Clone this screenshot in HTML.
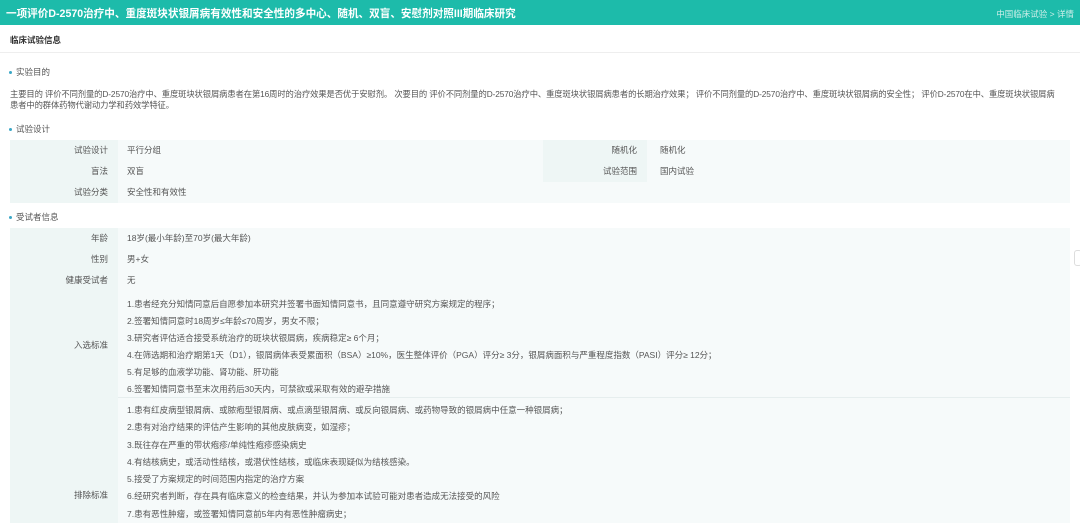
<!DOCTYPE html>
<html><head><meta charset="utf-8"><style>
*{margin:0;padding:0;box-sizing:border-box}
body{width:1080px;height:523px;overflow:hidden;background:#fff;font-family:"Liberation Sans","Noto Sans CJK SC",sans-serif;color:#555;font-size:8.5px;position:relative}
.a{position:absolute;white-space:nowrap}
.hd{left:0;top:0;width:1080px;height:25px;background:#1dbbaa}
.sec{color:#555;font-size:8.5px}
.sec:before{content:"";display:inline-block;width:3px;height:3px;background:#3aa7c6;border-radius:50%;margin-right:4px;vertical-align:middle}
.lb{background:#eef6f5;text-align:right;padding-right:10px;color:#555}
.row{position:absolute;line-height:20px;height:21px}
</style></head><body>
<div class="a hd"></div>
<div class="a" style="left:6px;top:6px;font-size:10.6px;font-weight:bold;color:#fff">一项评价D-2570治疗中、重度斑块状银屑病有效性和安全性的多中心、随机、双盲、安慰剂对照III期临床研究</div>
<div class="a" style="right:6px;top:8px;font-size:8.5px;color:#cdeee9">中国临床试验 &gt; 详情</div>
<div class="a" style="left:10px;top:34px;font-weight:bold;color:#333;font-size:8.5px">临床试验信息</div>
<div class="a" style="left:0;top:52px;width:1080px;height:1px;background:#eee"></div>

<div class="a sec" style="left:9px;top:66px">实验目的</div>
<div class="a" style="left:10px;top:89px;line-height:11px;font-size:8.3px;letter-spacing:-0.1px">主要目的 评价不同剂量的D-2570治疗中、重度斑块状银屑病患者在第16周时的治疗效果是否优于安慰剂。 次要目的 评价不同剂量的D-2570治疗中、重度斑块状银屑病患者的长期治疗效果； 评价不同剂量的D-2570治疗中、重度斑块状银屑病的安全性； 评价D-2570在中、重度斑块状银屑病<br>患者中的群体药物代谢动力学和药效学特征。</div>

<div class="a sec" style="left:9px;top:123px">试验设计</div>
<div class="a" style="left:10px;top:140px;width:1060px;height:63px;background:#f6fafa"></div>
<div class="row lb" style="left:10px;top:140px;width:108px">试验设计</div>
<div class="row a" style="left:127px;top:140px">平行分组</div>
<div class="row lb" style="left:10px;top:161px;width:108px">盲法</div>
<div class="row a" style="left:127px;top:161px">双盲</div>
<div class="row lb" style="left:10px;top:182px;width:108px">试验分类</div>
<div class="row a" style="left:127px;top:182px">安全性和有效性</div>
<div class="row lb" style="left:543px;top:140px;width:104px">随机化</div>
<div class="row a" style="left:660px;top:140px">随机化</div>
<div class="row lb" style="left:543px;top:161px;width:104px">试验范围</div>
<div class="row a" style="left:660px;top:161px">国内试验</div>

<div class="a sec" style="left:9px;top:211px">受试者信息</div>
<div class="a" style="left:10px;top:228px;width:1060px;height:295px;background:#f6fafa"></div>
<div class="a lb" style="left:10px;top:228px;width:108px;height:295px"></div>
<div class="row a" style="left:10px;top:228px;width:108px;text-align:right;padding-right:10px">年龄</div>
<div class="row a" style="left:127px;top:228px">18岁(最小年龄)至70岁(最大年龄)</div>
<div class="row a" style="left:10px;top:249px;width:108px;text-align:right;padding-right:10px">性别</div>
<div class="row a" style="left:127px;top:249px">男+女</div>
<div class="row a" style="left:10px;top:270px;width:108px;text-align:right;padding-right:10px">健康受试者</div>
<div class="row a" style="left:127px;top:270px">无</div>
<div class="row a" style="left:10px;top:335px;width:108px;text-align:right;padding-right:10px">入选标准</div>
<div class="a" style="left:127px;top:296px;line-height:17px">1.患者经充分知情同意后自愿参加本研究并签署书面知情同意书，且同意遵守研究方案规定的程序；<br>2.签署知情同意时18周岁≤年龄≤70周岁，男女不限；<br>3.研究者评估适合接受系统治疗的斑块状银屑病，疾病稳定≥ 6个月；<br>4.在筛选期和治疗期第1天（D1），银屑病体表受累面积（BSA）≥10%，医生整体评价（PGA）评分≥ 3分，银屑病面积与严重程度指数（PASI）评分≥ 12分；<br>5.有足够的血液学功能、肾功能、肝功能<br>6.签署知情同意书至末次用药后30天内，可禁欲或采取有效的避孕措施</div>
<div class="a" style="left:118px;top:397px;width:952px;height:1px;background:#e6eeee"></div>
<div class="row a" style="left:10px;top:485px;width:108px;text-align:right;padding-right:10px">排除标准</div>
<div class="a" style="left:127px;top:402px;line-height:17.3px">1.患有红皮病型银屑病、或脓疱型银屑病、或点滴型银屑病、或反向银屑病、或药物导致的银屑病中任意一种银屑病；<br>2.患有对治疗结果的评估产生影响的其他皮肤病变，如湿疹；<br>3.既往存在严重的带状疱疹/单纯性疱疹感染病史<br>4.有结核病史，或活动性结核，或潜伏性结核，或临床表现疑似为结核感染。<br>5.接受了方案规定的时间范围内指定的治疗方案<br>6.经研究者判断，存在具有临床意义的检查结果，并认为参加本试验可能对患者造成无法接受的风险<br>7.患有恶性肿瘤，或签署知情同意前5年内有恶性肿瘤病史；</div>
<div class="a" style="left:1074px;top:250px;width:8px;height:16px;background:#fff;border:1px solid #ddd;border-radius:3px"></div>
</body></html>
